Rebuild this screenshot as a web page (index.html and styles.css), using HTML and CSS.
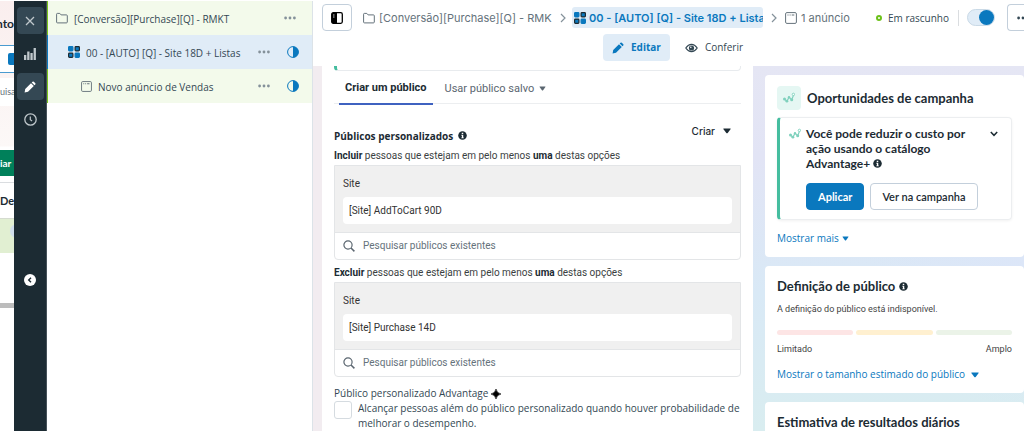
FILE: index.html
```html
<!DOCTYPE html>
<html lang="pt-BR">
<head>
<meta charset="utf-8">
<title>Gerenciador de anúncios</title>
<link rel="stylesheet" href="styles.css">
</head>
<body>
<svg class="defs" aria-hidden="true">
  <symbol id="folder" viewBox="0 0 12 12"><path d="M.6 10V2.2q0-.8.8-.8h2.4l1.3 1.5h5.300q.9 0 .9.8V10q0 .9-.9.9H1.500q-.9 0-.9-.9z" fill="none" stroke="currentColor"/></symbol>
  <symbol id="adset" viewBox="0 0 12 12"><g stroke="#1c2b33" stroke-width="1.200"><rect x=".6" y=".6" width="4.300" height="4.300" rx=".8" fill="#0a78be" stroke="#0a78be"/><rect x="7.100" y=".6" width="4.300" height="4.300" rx=".8" fill="#0a78be"/><rect x=".6" y="7.100" width="4.300" height="4.300" rx=".8" fill="#0a78be"/><rect x="7.100" y="7.100" width="4.300" height="4.300" rx=".8" fill="#0a78be" stroke="#0a78be"/></g></symbol>
  <symbol id="ad" viewBox="0 0 12 12"><rect x=".6" y=".6" width="10.800" height="10.800" rx="1.300" fill="none" stroke="currentColor"/><path d="M2.500 3h1M4.600 3h1M6.700 3h2.600" stroke="currentColor" stroke-width="1.200"/></symbol>
  <symbol id="half" viewBox="0 0 12 12"><circle cx="6" cy="6" r="5.400" fill="none" stroke="#0a78be"/><path d="M6 .5a5.500 5.500 0 0 1 0 11z" fill="#0a78be"/></symbol>
  <symbol id="dots" viewBox="0 0 12 4"><g fill="currentColor"><circle cx="1.600" cy="2" r="1.400"/><circle cx="6" cy="2" r="1.400"/><circle cx="10.400" cy="2" r="1.400"/></g></symbol>
  <symbol id="pencil" viewBox="0 0 12 12"><path d="M.6 11.400l.6-3.400L7 2.200 9.800 5 4 10.800zM7.700 1.500l.8-.8q.7-.5 1.300 0l1.500 1.500q.5.600 0 1.300l-.8.800z" fill="currentColor"/></symbol>
  <symbol id="info" viewBox="0 0 12 12"><circle cx="6" cy="6" r="5.700" fill="currentColor"/><path d="M5 2.200h2v1.700H5zM4.500 5H7v3.500h.7v1.200H4.400V8.500h.8V6.200h-.7z" fill="#fff"/></symbol>
  <symbol id="caret" viewBox="0 0 8 6"><path d="M.8.500h6.400q.9 0 .3.800L4.700 5q-.7.700-1.400 0L.5 1.300Q-.1.500.8.500z" fill="currentColor"/></symbol>
  <symbol id="search" viewBox="0 0 12 12"><circle cx="5" cy="5" r="4.100" fill="none" stroke="currentColor" stroke-width="1.200"/><path d="M8 8l3.400 3.400" stroke="currentColor" stroke-width="1.500"/></symbol>
  <symbol id="chev" viewBox="0 0 6 10"><path d="M1 1l4 4-4 4" fill="none" stroke="currentColor" stroke-width="1.200"/></symbol>
  <symbol id="spark" viewBox="0 0 12 12"><path d="M1.400 7l2.500 2.200L6 5.200l2.700 2.700 1.900-5" fill="none" stroke="currentColor" stroke-width="1.200"/><g fill="currentColor"><circle cx="1.500" cy="7" r="1.500"/><circle cx="3.900" cy="9.200" r="1.400"/><circle cx="6" cy="5.300" r="1.200"/><circle cx="8.700" cy="7.800" r="1.500"/></g><circle cx="10.400" cy="2.400" r="1.200" fill="#fff" stroke="currentColor" stroke-width=".9"/></symbol>
</svg>

<div class="app">
  <div class="behind">
    <div class="behind-title">nto</div>
    <div class="behind-field"><span class="behind-chip"></span></div>
    <div class="behind-search">uisa</div>
    <div class="behind-create">iar</div>
    <div class="behind-head">De</div>
    <div class="behind-row"><span class="behind-knob"></span></div>
    <div class="behind-scroll"></div>
  </div>

  <nav class="rail">
    <button class="rail-btn on" aria-label="Fechar"><svg width="10" height="10" viewBox="0 0 10 10"><path d="M1 1l8 8M9 1L1 9" stroke="currentColor" stroke-width="1.300"/></svg></button>
    <button class="rail-btn" aria-label="Gráficos"><svg width="12" height="12" viewBox="0 0 12 12"><g fill="currentColor"><rect x="0" y="7" width="2.300" height="5"/><rect x="3.200" y="3.500" width="2.300" height="8.500"/><rect x="6.400" y="5" width="2.300" height="7"/><rect x="9.600" y="0" width="2.300" height="12"/></g></svg></button>
    <button class="rail-btn on white" aria-label="Editar"><svg width="12" height="12"><use href="#pencil"/></svg></button>
    <button class="rail-btn" aria-label="Histórico"><svg width="13" height="13" viewBox="0 0 13 13"><circle cx="6.500" cy="6.500" r="5.700" fill="none" stroke="currentColor" stroke-width="1.300"/><path d="M6.300 3.500v3.200l1.800 1.200" fill="none" stroke="currentColor" stroke-width="1.200"/></svg></button>
    <button class="rail-collapse" aria-label="Recolher"><svg width="12" height="12" viewBox="0 0 12 12"><circle cx="6" cy="6" r="6" fill="#fff"/><path d="M7 3.700L4.700 6 7 8.300" fill="none" stroke="#1c2b33" stroke-width="1.400"/></svg></button>
  </nav>

  <aside class="tree">
    <div class="node"><svg class="muted" width="12" height="12"><use href="#folder"/></svg><span class="node-name">[Conversão][Purchase][Q] - RMKT</span><button class="more last" aria-label="Mais"><svg width="12" height="4"><use href="#dots"/></svg></button></div>
    <div class="node level2"><svg width="12" height="12"><use href="#adset"/></svg><span class="node-name">00 - [AUTO] [Q] - Site 18D + Listas</span><button class="more" aria-label="Mais"><svg width="12" height="4"><use href="#dots"/></svg></button><svg width="12" height="12"><use href="#half"/></svg></div>
    <div class="node level3"><svg class="muted" width="11" height="11" viewBox="0 0 12 12"><use href="#ad" width="12" height="12"/></svg><span class="node-name">Novo anúncio de Vendas</span><button class="more" aria-label="Mais"><svg width="12" height="4"><use href="#dots"/></svg></button><svg width="12" height="12"><use href="#half"/></svg></div>
  </aside>

  <main class="main">
    <header class="top">
      <div class="crumbs">
        <button class="panel-btn" aria-label="Painel"><svg width="12" height="12" viewBox="0 0 12 12"><rect x=".7" y=".7" width="10.600" height="10.600" rx="1.500" fill="#fff" stroke="#000" stroke-width="1.300"/><path d="M1 1h5v10H1z"/><path d="M2 3h1.500M2 5h1.500" stroke="#fff" stroke-width=".8"/></svg></button>
        <a class="crumb first" href="#"><svg width="12" height="12"><use href="#folder"/></svg><span class="crumb-text">[Conversão][Purchase][Q] - RMK</span></a>
        <svg class="chev" width="6" height="10"><use href="#chev"/></svg>
        <a class="crumb current" href="#"><svg width="12" height="12"><use href="#adset"/></svg><span class="crumb-text">00 - [AUTO] [Q] - Site 18D + Lista</span></a>
        <svg class="chev" width="6" height="10"><use href="#chev"/></svg>
        <a class="crumb ads" href="#"><svg width="12" height="12"><use href="#ad"/></svg><span>1 anúncio</span></a>
        <div class="status"><span class="ring"></span>Em rascunho</div>
        <input class="switch" type="checkbox" checked aria-label="Ativar">
        <button class="top-more" aria-label="Mais opções"><svg width="12" height="4"><use href="#dots"/></svg></button>
      </div>
      <div class="modes">
        <button class="mode active"><svg width="12" height="12"><use href="#pencil"/></svg>Editar</button>
        <button class="mode"><svg width="13" height="10" viewBox="0 0 13 10"><path d="M.8 5Q3.300 1.300 6.500 1.300T12.200 5Q9.700 8.700 6.500 8.700T.8 5z" fill="none" stroke="currentColor" stroke-width="1.200"/><circle cx="6.500" cy="5" r="2.600" fill="currentColor"/><circle cx="5.800" cy="4.300" r=".8" fill="#fff"/></svg>Conferir</button>
      </div>
    </header>

    <div class="body">
      <section class="form">
        <div class="prev-card"></div>
        <div class="tabs">
          <button class="tab selected">Criar um público</button>
          <button class="tab">Usar público salvo<svg width="7" height="5" viewBox="0 0 8 6"><use href="#caret" width="8" height="6"/></svg></button>
        </div>
        <div class="form-head"><h2>Públicos personalizados</h2><svg width="9" height="9"><use href="#info"/></svg><button class="create">Criar<svg width="8" height="6"><use href="#caret"/></svg></button></div>
        <p class="rule"><b>Incluir</b> pessoas que estejam em pelo menos <b>uma</b> destas opções</p>
        <div class="picker">
          <div class="picked"><span>Site</span><div class="chip">[Site] AddToCart 90D</div></div>
          <label class="find"><svg width="12" height="12"><use href="#search"/></svg><input type="text" aria-label="Pesquisar públicos para incluir" placeholder="Pesquisar públicos existentes"></label>
        </div>
        <p class="rule"><b>Excluir</b> pessoas que estejam em pelo menos <b>uma</b> destas opções</p>
        <div class="picker">
          <div class="picked"><span>Site</span><div class="chip">[Site] Purchase 14D</div></div>
          <label class="find"><svg width="12" height="12"><use href="#search"/></svg><input type="text" aria-label="Pesquisar públicos para excluir" placeholder="Pesquisar públicos existentes"></label>
        </div>
        <div class="advantage">Público personalizado Advantage<svg width="10" height="10" viewBox="0 0 10 10"><path d="M5 0q.7 4.200 5 5-4.300.8-5 5-.7-4.200-5-5 4.300-.8 5-5z" stroke="#000" stroke-width=".6"/></svg></div>
        <label class="reach"><input type="checkbox"><span>Alcançar pessoas além do público personalizado quando houver probabilidade de melhorar o desempenho.</span></label>
      </section>

      <aside class="side">
        <section class="card">
          <div class="opp-head"><span class="badge"><svg width="12" height="12"><use href="#spark"/></svg></span><h3>Oportunidades de campanha</h3></div>
          <div class="tip">
            <svg class="tip-icon" width="12" height="12"><use href="#spark"/></svg>
            <div class="tip-main">
              <h4>Você pode reduzir o custo por ação usando o catálogo Advantage+ <svg width="9" height="9"><use href="#info"/></svg></h4>
              <div class="tip-actions"><button class="btn primary">Aplicar</button><button class="btn">Ver na campanha</button></div>
            </div>
            <button class="fold" aria-label="Recolher"><svg width="8" height="6" viewBox="0 0 8 6"><path d="M.8 1L4 4.300 7.200 1" fill="none" stroke="currentColor" stroke-width="1.500"/></svg></button>
          </div>
          <a class="link more-link" href="#">Mostrar mais<svg width="7" height="5" viewBox="0 0 8 6"><use href="#caret" width="8" height="6"/></svg></a>
        </section>
        <section class="card audience">
          <h3>Definição de público<svg width="9" height="9"><use href="#info"/></svg></h3>
          <p class="small">A definição do público está indisponível.</p>
          <div class="meter"><span class="low"></span><span class="mid"></span><span class="high"></span></div>
          <div class="ends"><span>Limitado</span><span>Amplo</span></div>
          <a class="link size-link" href="#">Mostrar o tamanho estimado do público<svg width="8" height="6"><use href="#caret"/></svg></a>
        </section>
        <section class="card"><h3>Estimativa de resultados diários</h3></section>
      </aside>
    </div>
  </main>
</div>
</body>
</html>
```
FILE: styles.css
```css
* { box-sizing: border-box; }
body { margin: 0; background: #fff; color: #1c2b33; font: 10px/15px "Open Sans", "Noto Sans", sans-serif; overflow: hidden; }
h2, h3, h4, p { margin: 0; }
button { padding: 0; border: 0; background: none; color: inherit; font: inherit; cursor: pointer; }
a { color: inherit; text-decoration: none; }
svg { flex: none; }
.defs { display: none; }
.app { display: flex; height: 100vh; padding-top: 1px; }

/* Page under the editor */
.behind { flex: none; width: 14px; overflow: hidden; white-space: nowrap; background: linear-gradient(#faeeee, #fcf8f7 145px, #fff 146px); }
.behind-title { display: flex; justify-content: flex-end; height: 44px; padding-top: 14px; font: 700 12px/18px Lato, sans-serif; }
.behind-field { width: 40px; height: 28px; padding: 7px 0 0 8px; border: 1px solid #4a9bd0; border-left: 0; background: #fff; }
.behind-chip { display: block; width: 14px; height: 12px; border-radius: 2px; background: #0a78be; }
.behind-search { height: 28px; margin: 5px 0 44px; background: #fff; color: #65727b; font: 9px/28px Lato, sans-serif; }
.behind-create { height: 26px; background: #00805a; color: #fff; font: 700 10px/26px Lato, sans-serif; }
.behind-head { height: 36px; margin-top: 6px; border-top: 1px solid #dadde0; font: 700 11px/35px Lato, sans-serif; }
.behind-row { height: 35px; padding: 5px 0 0 10px; border-top: 1px solid #d5dbd0; background: #e1efd2; }
.behind-knob { display: block; width: 14px; height: 14px; border-radius: 50%; background: #d0deeb; }
.behind-scroll { height: 5px; margin-top: 50px; background: #bcbcbc; }

.rail { flex: none; width: 33px; display: flex; flex-direction: column; align-items: center; gap: 6px; padding: 6px 0; background: #1c2b33; border-right: 1px solid #46525a; color: #c0c8cc; }
.rail-btn { width: 27px; height: 27px; display: grid; place-items: center; border-radius: 4px; }
.rail-btn.on { background: #344854; }
.rail-btn.white { color: #fff; }
.rail-collapse { display: flex; margin-top: 135px; }

.tree { flex: none; width: 266px; border-right: 1px solid #dce3e8; background: #fff; }
.node { display: flex; align-items: center; height: 34px; padding: 0 13px 0 8px; border-left: 1px solid #7ac71c; background: #f3faeb; color: #344854; }
.level2 { padding-left: 20px; border-color: #0a78be; background: #e0ecf7; }
.level3 { padding-left: 33px; }
.node-name { flex: 1; margin-left: 6px; padding-top: 2px; }
.muted { color: #65727b; }
.more { display: flex; margin-right: 17px; color: #84919a; }
.more.last { margin-right: 3px; }

.main { flex: 1; min-width: 0; display: flex; flex-direction: column; }
.top { flex: none; height: 65px; padding: 3px 0 0 9px; overflow: hidden; }
.crumbs { display: flex; align-items: center; height: 27px; font: 11px/20px Inter, sans-serif; color: #65727b; }
.panel-btn { flex: none; width: 30px; height: 27px; display: grid; place-items: center; border: 1px solid #c3cfdb; border-radius: 4px; }
.crumb { display: flex; align-items: center; gap: 4px; min-width: 0; white-space: nowrap; }
.crumb-text { overflow: hidden; }
.first { flex: none; width: 190px; margin: 0 7px 0 11px; }
.chev { flex: none; color: #84919a; }
.current { flex: none; width: 191px; height: 21px; margin: 0 8px 0 6px; padding-left: 2px; border-radius: 3px; background: #e0ecf7; color: #0a78be; font-weight: 600; gap: 3px; }
.ads { margin-left: 8px; }
.status { display: flex; align-items: center; gap: 6px; height: 16px; margin-left: auto; padding-right: 9px; border-right: 1px solid #dadde0; color: #344854; font: 10px/16px "Open Sans", sans-serif; white-space: nowrap; }
.ring { width: 6px; height: 6px; border: 2px solid #6cc11a; border-radius: 50%; }
.switch { appearance: none; flex: none; display: flex; justify-content: flex-end; width: 28px; height: 17px; margin: 0 12px 0 8px; border: 1px solid #c9d9e6; border-radius: 9px; background: #e0ecf7; }
.switch::before { content: ""; width: 15px; height: 15px; border-radius: 50%; background: #0a78be; }
.top-more { flex: none; width: 17px; height: 27px; padding-left: 9px; overflow: hidden; border: 1px solid #c3cfdb; border-right: 0; border-radius: 4px 0 0 4px; display: flex; align-items: center; color: #344854; }
.modes { display: flex; justify-content: center; gap: 15px; padding-top: 3px; }
.mode { display: flex; align-items: center; gap: 7px; height: 27px; color: #344854; }
.active { padding: 0 9px; border-radius: 4px; background: #e0ecf7; color: #0a78be; font-weight: 700; }

.body { flex: 1; min-height: 0; display: flex; overflow: hidden; padding-left: 9px; background: linear-gradient(#f2ecf0, #f2ecf0) left / 9px no-repeat, radial-gradient(circle at 100% 50%, #dce6f8, transparent 160px), linear-gradient(#e5e6f4, #e2e4f5 25%, #d9e9f6 62%, #d9edf0); }
.form { flex: 1; min-width: 0; padding: 0 12px; background: #fff; font-family: Roboto, sans-serif; }
.prev-card { height: 5px; border: solid #e8ebee; border-width: 0 1px 1px 0; border-left: 3px solid #45bd9f; border-radius: 0 0 4px 4px; }
.tabs { display: flex; gap: 6px; height: 33px; border-bottom: 1px solid #eceef0; }
.tab { display: flex; align-items: center; gap: 5px; height: 34px; padding: 0 6px; color: #5b6670; font-size: 11px; }
.tab:first-child { margin-left: 5px; }
.selected { border-bottom: 2px solid #3f62c0; color: #1c2b33; font-weight: 700; }
.form-head { display: flex; align-items: center; gap: 5px; height: 30px; margin-top: 14px; }
.form-head h2 { font: 700 10px/16px "Open Sans", sans-serif; padding-top: 5px; }
.form-head > svg { margin-top: 5px; }
.create { display: flex; align-items: center; gap: 8px; margin: 0 10px 5px auto; font: 500 10px/16px Inter, sans-serif; }
.rule { font-size: 10px; line-height: 16px; color: #3b3f42; }
.rule b { color: #1c2b33; }
.picker { margin: 1px 0 5px; border: 1px solid #e3e5e7; border-radius: 0 0 4px 4px; overflow: hidden; }
.picked { padding: 10px 8px 8px; background: #f0f0f0; border-bottom: 1px solid #e3e5e7; color: #333; }
.chip { height: 27px; margin-top: 6px; padding: 0 6px; border-radius: 4px; background: #fff; line-height: 27px; }
.find { display: flex; align-items: center; gap: 8px; height: 26px; padding: 0 8px; color: #5b6670; }
.find input { flex: 1; min-width: 0; padding: 0; border: 0; outline: 0; background: none; font: 10px/16px Roboto, sans-serif; }
.find input::placeholder { color: #65727b; }
.advantage { display: flex; align-items: center; gap: 3px; margin-top: 9px; color: #344854; font: 10px/15px "Open Sans", sans-serif; }
.reach { display: flex; gap: 6px; color: #344854; font: 10px/15px "Open Sans", sans-serif; }
.reach input { appearance: none; flex: none; width: 18px; height: 18px; margin: 0; border: 1px solid #d5dbe0; border-radius: 3px; background: #fff; }

.side { flex: none; width: 271px; padding: 9px 0 0 12px; display: flex; flex-direction: column; gap: 9px; }
.card { flex: none; padding: 11px 12px; background: #fff; border-radius: 4px; }
h3 { display: flex; align-items: center; gap: 4px; font: 700 13px/18px Lato, sans-serif; }
.opp-head { display: flex; align-items: center; gap: 6px; }
.badge { display: grid; place-items: center; width: 24px; height: 24px; border-radius: 4px; background: #e5f7f3; color: #7fd1bd; }
.tip { display: flex; margin-top: 7px; padding: 8px 13px 9px 9px; border: 1px solid #eceef0; border-left: 3px solid #45bd9f; border-radius: 4px; box-shadow: 0 1px 3px #0000000f; }
.tip-icon { margin-top: 2px; color: #7fd1bd; }
.tip-main { flex: 1; margin-left: 5px; }
h4 { max-width: 162px; font: 700 12px/15px Lato, sans-serif; }
.tip-actions { display: flex; gap: 6px; margin-top: 12px; }
.btn { height: 27px; padding: 0 11px; border: 1px solid #c3cfdb; border-radius: 4px; background: #fff; font: 600 11px/15px Lato, sans-serif; white-space: nowrap; }
.primary { border-color: #0a78be; background: #0a78be; color: #fff; font-weight: 700; }
.fold { display: flex; margin-top: 5px; align-self: flex-start; }
.link { display: flex; align-items: center; gap: 3px; color: #0a78be; }
.more-link { margin-top: 11px; }
.small { margin-top: 7px; font: 9px/14px Roboto, sans-serif; color: #444; }
.meter { display: grid; grid-template-columns: repeat(3, 1fr); gap: 3px; height: 5px; margin-top: 14px; }
.meter span { border-radius: 3px; }
.low { background: #fde5e5; }
.mid { background: #fff0d0; }
.high { background: #ebf3e8; }
.ends { display: flex; justify-content: space-between; margin-top: 7px; font: 9px/15px Roboto, sans-serif; color: #444; }
.size-link { margin-top: 10px; gap: 6px; }
```
